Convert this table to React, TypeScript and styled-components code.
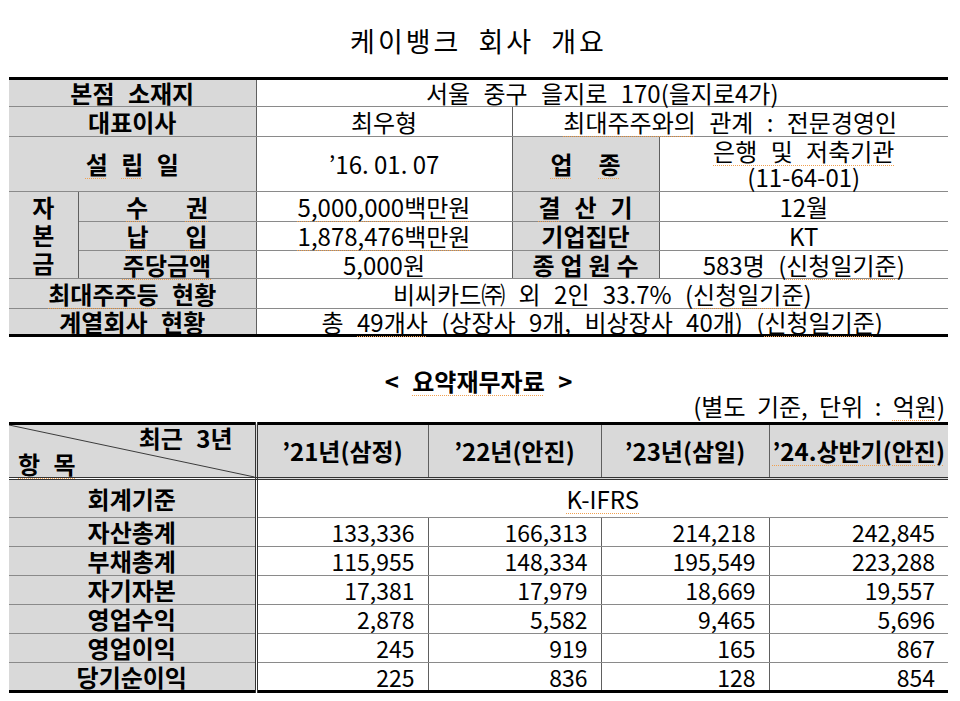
import React from 'react';
import styled, { createGlobalStyle } from 'styled-components';

const Global = createGlobalStyle`
  html, body { margin: 0; padding: 0; background: #ffffff; }
  body {
    font-family: "Noto Sans CJK KR", "Noto Sans", sans-serif;
    color: #000000;
  }
`;

const Page = styled.div`
  width: 960px;
  box-sizing: border-box;
  padding: 23px 12px 0 9px;
`;

const Title = styled.h1`
  margin: 0 0 18px;
  text-align: center;
  font-size: 27px;
  font-weight: 400;
  line-height: 36px;
  letter-spacing: 3px;
  word-spacing: 8px;
`;

const Table = styled.table`
  width: 939px;
  table-layout: fixed;
  border-collapse: collapse;
  border-top: 3px solid #000;
  border-bottom: 3px solid #000;
  border-left: hidden;
  border-right: hidden;
  font-size: 24px;
  line-height: 24px;
  word-spacing: 8px;
`;

const Row = styled.tr<{ $h: number }>`
  height: ${(p) => p.$h}px;
`;

type Align = 'left' | 'center' | 'right';

const Cell = styled.td<{ $label?: boolean; $align?: Align; $dblRight?: boolean; $dblBottom?: boolean; $tight?: boolean }>`
  padding: 0 ${(p) => (p.$align === 'right' ? '13px' : '0')} 0 0;
  text-align: ${(p) => p.$align ?? 'center'};
  vertical-align: middle;
  white-space: nowrap;
  overflow: visible;
  font-size: ${(p) => (p.$align === 'right' ? '23px' : '24px')};
  word-spacing: ${(p) => (p.$tight ? '0' : '8px')};
  background: ${(p) => (p.$label ? '#d9d9d9' : '#ffffff')};
  font-weight: ${(p) => (p.$label ? 700 : 400)};
  border-bottom: ${(p) => (p.$dblBottom ? '3px double #333' : '1px solid #8a8a8a')};
  border-right: ${(p) => (p.$dblRight ? '3px double #333' : '1px solid #606060')};
`;

const TwoLine = styled.div`
  line-height: 26px;
`;

const DiagCell = styled(Cell)`
  position: relative;
  padding: 0;
`;

const DiagLine = styled.svg`
  position: absolute;
  inset: 0;
  width: 100%;
  height: 100%;
  pointer-events: none;
`;

const DiagTop = styled.div`
  position: relative;
  text-align: right;
  padding-right: 22px;
  line-height: 26px;
`;

const DiagBottom = styled.div`
  position: relative;
  text-align: left;
  padding-left: 9px;
  line-height: 26px;
`;

const Stacked = styled.div`
  display: flex;
  flex-direction: column;
  align-items: center;
  line-height: 28px;
`;

const Spread = styled.span<{ $w: number }>`
  display: inline-flex;
  justify-content: space-between;
  width: ${(p) => p.$w}px;
  vertical-align: top;
`;

const Mark = styled.span`
  text-decoration: underline dotted #f0a050;
  text-decoration-thickness: 1px;
  text-underline-offset: 4px;
`;

const SectionTitle = styled.h2`
  margin: 32px 0 0;
  text-align: center;
  font-size: 24px;
  font-weight: 700;
  line-height: 24px;
  word-spacing: 8px;
`;

const UnitNote = styled.div`
  text-align: right;
  font-size: 24px;
  line-height: 26px;
  padding-right: 3px;
  margin-bottom: 3px;
  word-spacing: 6px;
`;

const spread = (chars: string[], w: number, marked: number[] = []) => (
  <Spread $w={w}>
    {chars.map((c, i) => (marked.includes(i) ? <Mark key={i}>{c}</Mark> : <span key={i}>{c}</span>))}
  </Spread>
);

const finRows: string[][] = [
  ['자산총계', '133,336', '166,313', '214,218', '242,845'],
  ['부채총계', '115,955', '148,334', '195,549', '223,288'],
  ['자기자본', '17,381', '17,979', '18,669', '19,557'],
  ['영업수익', '2,878', '5,582', '9,465', '5,696'],
  ['영업이익', '245', '919', '165', '867'],
  ['당기순이익', '225', '836', '128', '854'],
];

export default function App() {
  return (
    <Page>
      <Global />
      <Title>케이뱅크 회사 개요</Title>

      <Table>
        <colgroup>
          <col style={{ width: 69 }} />
          <col style={{ width: 178 }} />
          <col style={{ width: 256 }} />
          <col style={{ width: 147 }} />
          <col style={{ width: 289 }} />
        </colgroup>
        <tbody>
          <Row $h={28}>
            <Cell $label colSpan={2}>본점 소재지</Cell>
            <Cell colSpan={3}>서울 중구 을지로 170(을지로4가)</Cell>
          </Row>
          <Row $h={30}>
            <Cell $label colSpan={2}>대표이사</Cell>
            <Cell>최우형</Cell>
            <Cell colSpan={2}>
              <Mark>최대주주와의</Mark> 관계 : 전문경영인
            </Cell>
          </Row>
          <Row $h={55}>
            <Cell $label colSpan={2}>{spread(['설', '립', '일'], 93, [0, 1])}</Cell>
            <Cell $tight>’16. 01. 07</Cell>
            <Cell $label>{spread(['업', '종'], 70, [0, 1])}</Cell>
            <Cell>
              <TwoLine>
                <Mark>은행 및 저축기관</Mark>
                <br />
                (11-64-01)
              </TwoLine>
            </Cell>
          </Row>
          <Row $h={30}>
            <Cell $label rowSpan={3}>
              <Stacked>
                <span>자</span>
                <span>본</span>
                <span>금</span>
              </Stacked>
            </Cell>
            <Cell $label>{spread(['수', '권'], 82, [0, 1])}</Cell>
            <Cell>
              <Mark>5,000,000백만원</Mark>
            </Cell>
            <Cell $label>{spread(['결', '산', '기'], 94, [0])}</Cell>
            <Cell>12월</Cell>
          </Row>
          <Row $h={29}>
            <Cell $label>{spread(['납', '입'], 81, [0, 1])}</Cell>
            <Cell>
              <Mark>1,878,476백만원</Mark>
            </Cell>
            <Cell $label>기업집단</Cell>
            <Cell>KT</Cell>
          </Row>
          <Row $h={28}>
            <Cell $label>
              <Mark>주당금액</Mark>
            </Cell>
            <Cell>5,000원</Cell>
            <Cell $label>{spread(['종', '업', '원', '수'], 106)}</Cell>
            <Cell>
              583명 (<Mark>신청일기준</Mark>)
            </Cell>
          </Row>
          <Row $h={30}>
            <Cell $label colSpan={2}>
              <Mark>최대주주등</Mark> 현황
            </Cell>
            <Cell colSpan={3}>
              비씨카드㈜ 외 2인 33.7% (<Mark>신청일기준</Mark>)
            </Cell>
          </Row>
          <Row $h={27}>
            <Cell $label colSpan={2}>계열회사 현황</Cell>
            <Cell colSpan={3}>
              총 <Mark>49개사</Mark> (상장사 9개, 비상장사 40개) (<Mark>신청일기준</Mark>)
            </Cell>
          </Row>
        </tbody>
      </Table>

      <SectionTitle>
        &lt; <Mark>요약재무자료</Mark> &gt;
      </SectionTitle>
      <UnitNote>
        (별도 기준, 단위 : <Mark>억원</Mark>)
      </UnitNote>

      <Table>
        <colgroup>
          <col style={{ width: 247 }} />
          <col style={{ width: 172 }} />
          <col style={{ width: 173 }} />
          <col style={{ width: 168 }} />
          <col style={{ width: 179 }} />
        </colgroup>
        <tbody>
          <Row $h={55}>
            <DiagCell as="th" $label $dblRight $dblBottom>
              <DiagLine viewBox="0 0 100 100" preserveAspectRatio="none">
                <line x1="0" y1="0" x2="100" y2="100" stroke="#3a3a3a" strokeWidth="1" vectorEffect="non-scaling-stroke" />
              </DiagLine>
              <DiagTop>최근 3년</DiagTop>
              <DiagBottom>
                <Mark>항 목</Mark>
              </DiagBottom>
            </DiagCell>
            <Cell as="th" $label $dblBottom>’21년(삼정)</Cell>
            <Cell as="th" $label $dblBottom>’22년(안진)</Cell>
            <Cell as="th" $label $dblBottom>’23년(삼일)</Cell>
            <Cell as="th" $label $dblBottom>
              <Mark>’24.상반기(안진)</Mark>
            </Cell>
          </Row>
          <Row $h={39}>
            <Cell $label $dblRight>회계기준</Cell>
            <Cell colSpan={4}>
              <Mark>K-IFRS</Mark>
            </Cell>
          </Row>
          {finRows.map((r) => (
            <Row $h={29} key={r[0]}>
              <Cell $label $dblRight>{r[0]}</Cell>
              {r.slice(1).map((v, i) => (
                <Cell $align="right" key={i}>{v}</Cell>
              ))}
            </Row>
          ))}
        </tbody>
      </Table>
    </Page>
  );
}
